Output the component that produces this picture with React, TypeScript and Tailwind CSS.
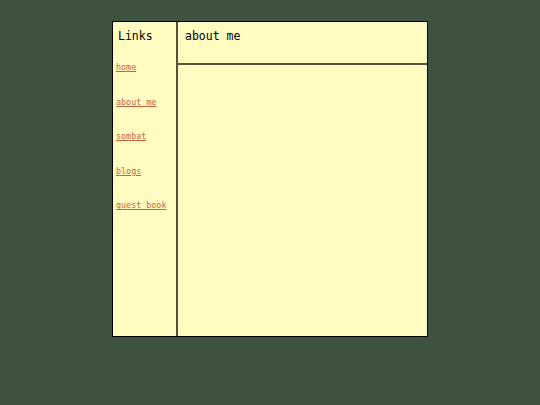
import React from 'react';

const LINKS = ['home', 'about me', 'sombat', 'blogs', 'guest book'];

export default function App() {
  return (
    <div className="min-h-[405px] w-full bg-[#3d5340] pt-[21px]" style={{ fontFamily: '"DejaVu Sans Mono", monospace' }}>
      <div className="mx-auto flex h-[316px] w-[316px] border border-black bg-[#fffbc1]">
        <aside className="flex w-[65px] flex-col border-r-2 border-[#5a4f38] pl-[3px]">
          <h2 className="mt-[6px] pl-[2px] text-[11.5px] leading-[16px] text-black">Links</h2>
          <nav className="mt-[18px] flex flex-col gap-[23.6px]">
            {LINKS.map((l) => (
              <a key={l} href="#" className="text-[8.4px] leading-[11px] text-[#c4643f] underline">
                {l}
              </a>
            ))}
          </nav>
        </aside>
        <main className="flex flex-1 flex-col">
          <header className="h-[43px] border-b-2 border-[#5a4f38] pl-[7px] pt-[6px]">
            <h1 className="text-[11.5px] leading-[16px] text-black">about me</h1>
          </header>
          <div className="flex-1" />
        </main>
      </div>
    </div>
  );
}
